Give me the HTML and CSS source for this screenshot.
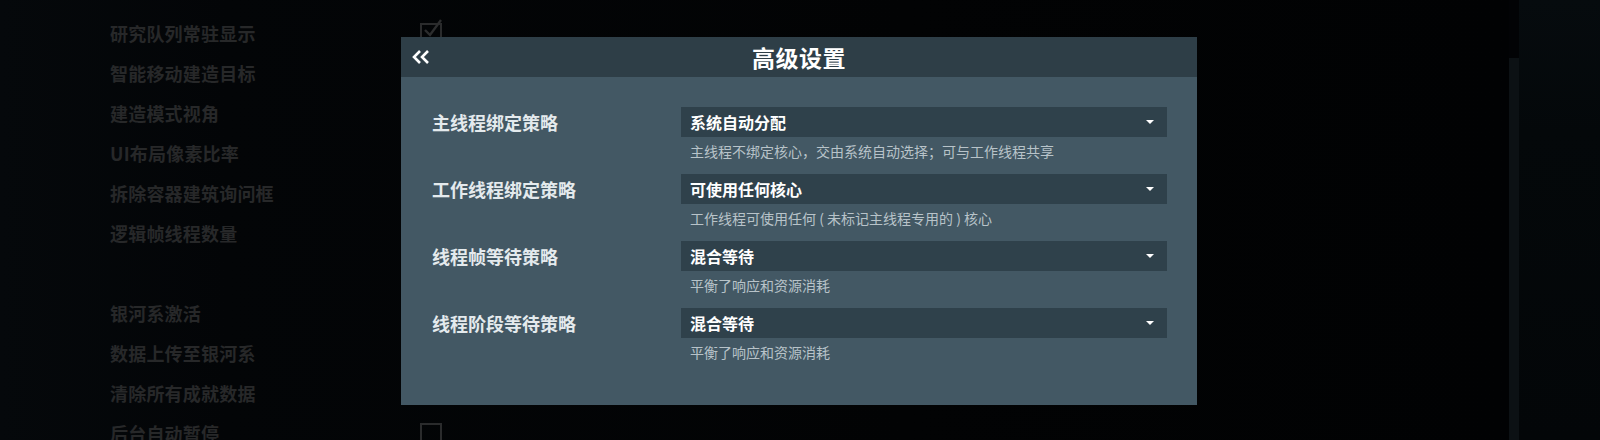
FILE: index.html
```html
<!DOCTYPE html>
<html lang="zh-CN">
<head>
<meta charset="utf-8">
<title>高级设置</title>
<link rel="stylesheet" href="styles.css">
</head>
<body>
<div class="page">
  <div class="main">
    <div class="settings">
      <div class="srow"><span class="slabel">研究队列常驻显示</span><span class="check checked"><svg viewBox="0 0 24 26" width="24" height="26"><path d="M5 14 L10 19 L21 4" fill="none" stroke="#2c2d2e" stroke-width="2.4"/></svg></span></div>
      <div class="srow"><span class="slabel">智能移动建造目标</span></div>
      <div class="srow"><span class="slabel">建造模式视角</span></div>
      <div class="srow"><span class="slabel">UI布局像素比率</span></div>
      <div class="srow"><span class="slabel">拆除容器建筑询问框</span></div>
      <div class="srow"><span class="slabel">逻辑帧线程数量</span></div>
      <div class="srow"><span class="slabel"></span></div>
      <div class="srow"><span class="slabel">银河系激活</span></div>
      <div class="srow"><span class="slabel">数据上传至银河系</span></div>
      <div class="srow"><span class="slabel">清除所有成就数据</span></div>
      <div class="srow"><span class="slabel">后台自动暂停</span><span class="check"></span></div>
    </div>
  </div>
  <div class="scrolltrack"></div>
  <div class="side"></div>
</div>

<div class="modal">
  <div class="modal-head">
    <span class="back"><svg viewBox="0 0 18 14" width="18" height="14"><path d="M8 1 L2 7 L8 13 M16 1 L10 7 L16 13" fill="none" stroke="#ffffff" stroke-width="2.6" stroke-linejoin="miter"/></svg></span>
    <h1 class="title">高级设置</h1>
  </div>
  <div class="modal-body">
    <div class="row">
      <div class="label">主线程绑定策略</div>
      <div class="field">
        <div class="select"><span>系统自动分配</span><i class="arrow"></i></div>
        <div class="desc">主线程不绑定核心，交由系统自动选择；可与工作线程共享</div>
      </div>
    </div>
    <div class="row">
      <div class="label">工作线程绑定策略</div>
      <div class="field">
        <div class="select"><span>可使用任何核心</span><i class="arrow"></i></div>
        <div class="desc">工作线程可使用任何 ( 未标记主线程专用的 ) 核心</div>
      </div>
    </div>
    <div class="row">
      <div class="label">线程帧等待策略</div>
      <div class="field">
        <div class="select"><span>混合等待</span><i class="arrow"></i></div>
        <div class="desc">平衡了响应和资源消耗</div>
      </div>
    </div>
    <div class="row">
      <div class="label">线程阶段等待策略</div>
      <div class="field">
        <div class="select"><span>混合等待</span><i class="arrow"></i></div>
        <div class="desc">平衡了响应和资源消耗</div>
      </div>
    </div>
  </div>
</div>
</body>
</html>
```

FILE: styles.css
```css
* { box-sizing: border-box; }
html, body {
  margin: 0;
  padding: 0;
  width: 1600px;
  height: 440px;
  overflow: hidden;
  background: #020305;
  font-family: "Noto Sans CJK SC", "Noto Sans", sans-serif;
}
.page {
  display: flex;
  width: 1600px;
  height: 440px;
}
.main {
  flex: 1;
  background: linear-gradient(90deg, #05080b 0%, #030507 15%, #020304 60%, #010203 100%);
}
.settings {
  padding: 13px 0 0 110px;
  display: flex;
  flex-direction: column;
}
.srow {
  height: 40px;
  display: flex;
  align-items: center;
}
.slabel {
  width: 310px;
  font-size: 18px;
  font-weight: 700;
  color: #272829;
  letter-spacing: 0.2px;
}
.check {
  width: 22px;
  height: 21px;
  border: 2px solid #2a2b2c;
  position: relative;
}
.check svg {
  position: absolute;
  left: -2px;
  top: -9px;
}
.scrolltrack {
  width: 10px;
  margin-top: 58px;
  background: #0c1114;
}
.side {
  width: 81px;
  background: linear-gradient(180deg, #060b0e 0%, #04080a 30%, #030608 100%);
}

.modal {
  position: absolute;
  left: 401px;
  top: 37px;
  width: 796px;
  height: 368px;
  background: #435864;
  display: flex;
  flex-direction: column;
}
.modal-head {
  height: 40px;
  background: #2e3e47;
  display: flex;
  align-items: center;
  justify-content: center;
  position: relative;
}
.back {
  position: absolute;
  left: 11px;
  top: 13px;
  display: flex;
}
.title {
  margin: 0;
  font-size: 23px;
  font-weight: 700;
  color: #ffffff;
  letter-spacing: 0.5px;
}
.modal-body {
  padding: 30px 30px 0 31px;
  display: flex;
  flex-direction: column;
  gap: 13px;
}
.row {
  display: grid;
  grid-template-columns: 249px 1fr;
}
.label {
  height: 30px;
  display: flex;
  align-items: center;
  font-size: 18px;
  font-weight: 700;
  color: #e4eaed;
}
.select {
  height: 30px;
  background: #2f414b;
  display: flex;
  align-items: center;
  justify-content: space-between;
  padding: 0 13px 0 9px;
  font-size: 16px;
  font-weight: 700;
  color: #ffffff;
}
.arrow {
  width: 0;
  height: 0;
  border-left: 4px solid transparent;
  border-right: 4px solid transparent;
  border-top: 4px solid #ffffff;
}
.desc {
  margin-top: 4px;
  height: 20px;
  line-height: 20px;
  padding-left: 9px;
  font-size: 14px;
  color: #b8c3c9;
}
```
